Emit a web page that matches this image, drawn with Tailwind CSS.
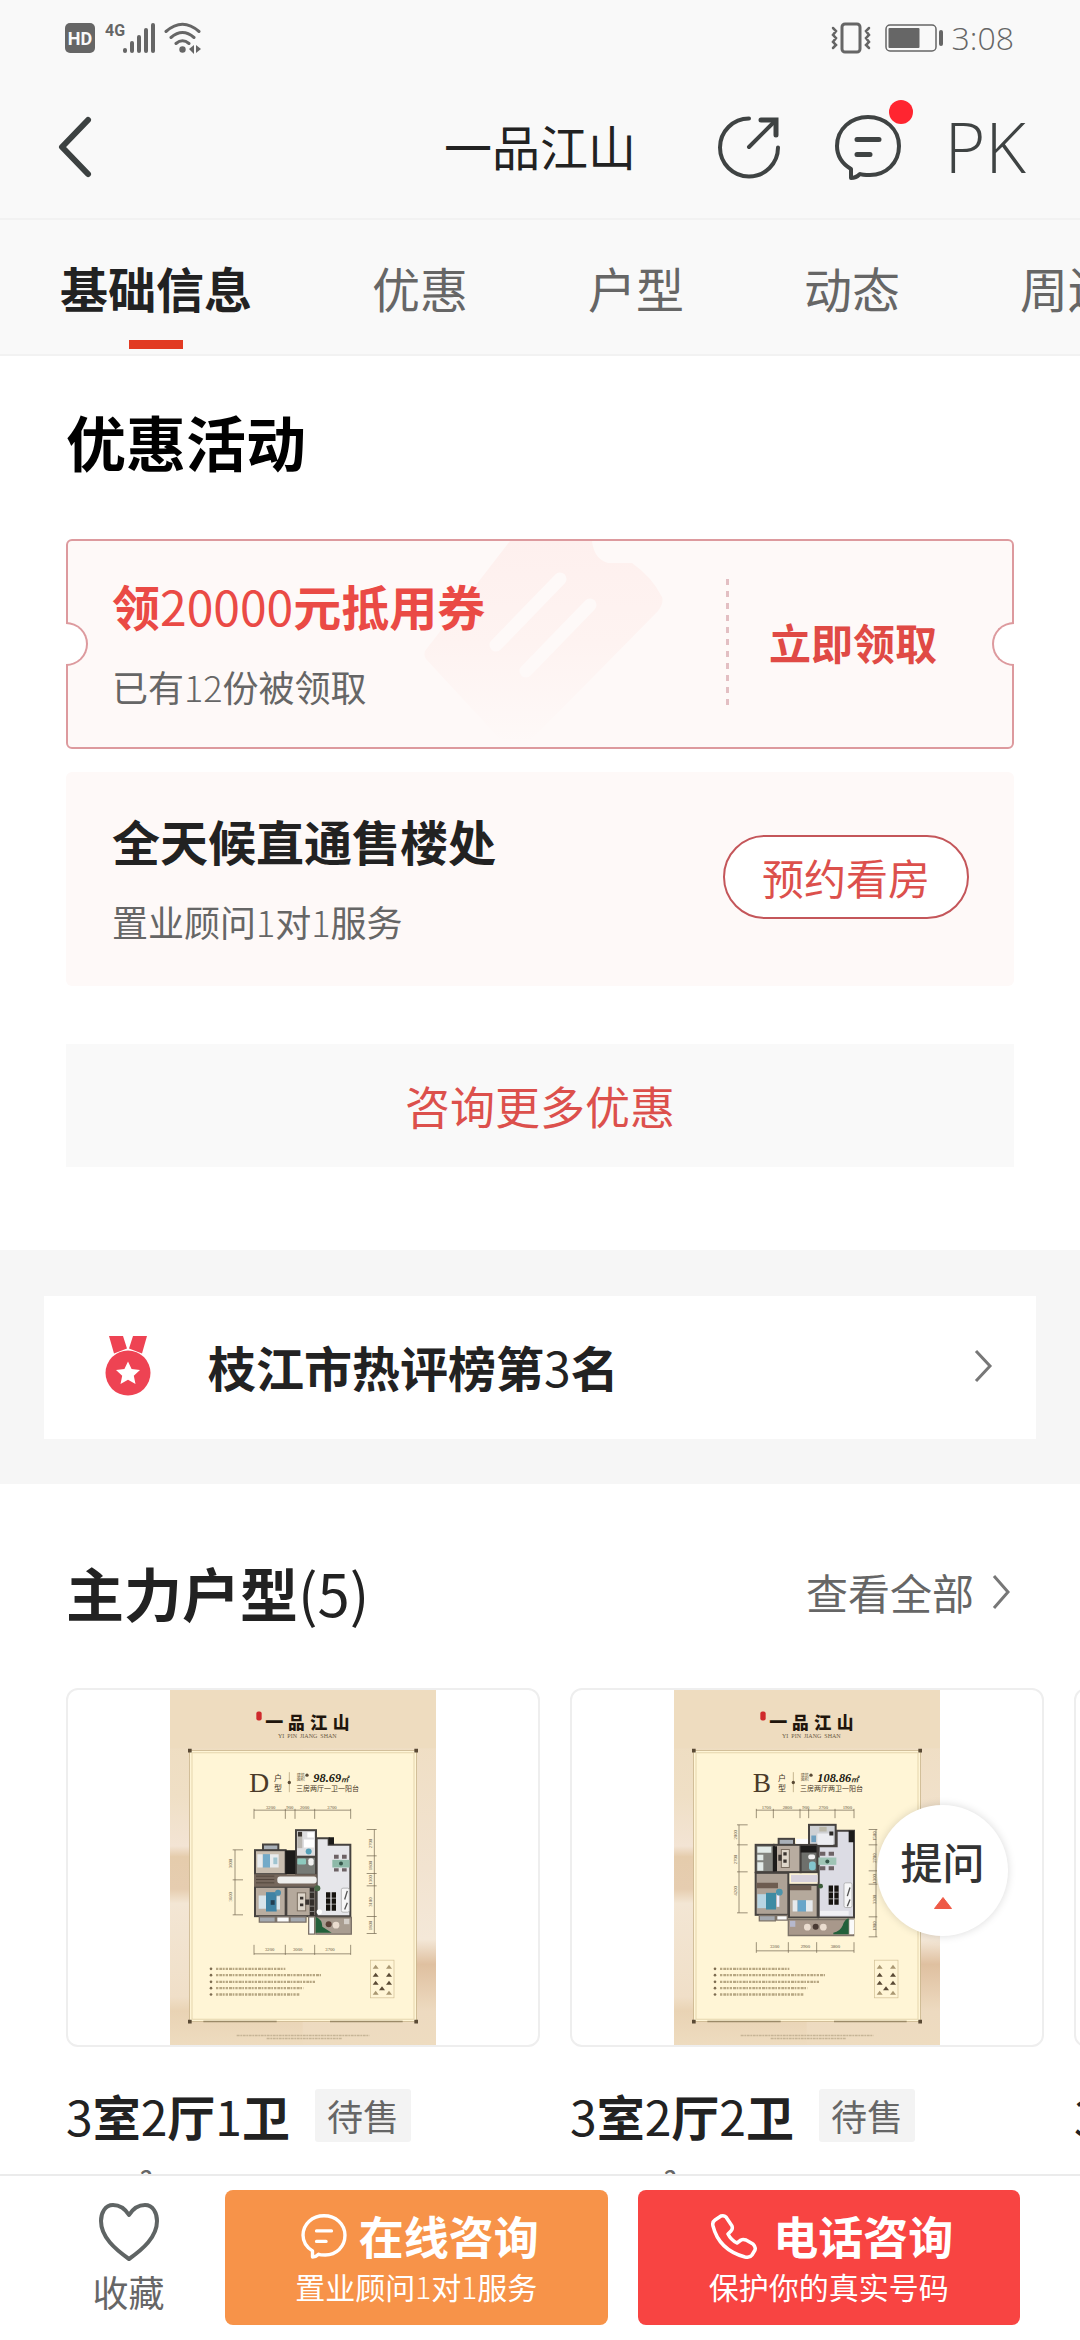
<!DOCTYPE html>
<html lang="zh-CN">
<head>
<meta charset="utf-8">
<meta name="viewport" content="width=device-width, initial-scale=1">
<title>一品江山</title>
<script src="https://cdn.jsdelivr.net/npm/@tailwindcss/browser@4"></script>
</head>
<body class="bg-white font-['Noto_Sans_CJK_SC',sans-serif] text-[#222]">
<div class="relative flex h-screen flex-col overflow-hidden">

  <header class="shrink-0 bg-[#f9f9f9]">
    <!-- status bar -->
    <div class="flex h-[76px] items-center justify-between pl-[65px] pr-[66px] text-[#666]">
      <div class="flex items-center">
        <span class="flex h-[30px] w-[30px] items-center justify-center rounded-[5px] bg-[#666] font-['Roboto',sans-serif] text-[18px] font-bold text-[#f9f9f9]">HD</span>
        <svg class="ml-[10px] h-[32px] w-[52px]" viewBox="0 0 52 32" fill="currentColor">
          <text x="0" y="14" font-family="Roboto, sans-serif" font-size="16" font-weight="700">4G</text>
          <rect x="18" y="26" width="4" height="5" rx="2"/><rect x="25" y="19" width="4" height="12" rx="2"/><rect x="32" y="13" width="4" height="18" rx="2"/><rect x="39" y="6" width="4" height="25" rx="2"/><rect x="46" y="1" width="4" height="30" rx="2"/>
        </svg>
        <svg class="ml-[7px] h-[32px] w-[38px]" viewBox="0 0 38 32" fill="none" stroke="currentColor" stroke-width="3" stroke-linecap="round">
          <path d="M2 9.500Q18.500-5 35 9.500M7 15.500Q18.500 5.500 30 15.500M12 21.500Q18.500 16 25 21.500"/>
          <circle cx="18.500" cy="27.500" r="3.200" fill="currentColor" stroke="none"/>
          <path d="M30 23v9l-5-5zM32 31v-8l5 4z" fill="currentColor" stroke="none"/>
        </svg>
      </div>
      <div class="flex items-center">
        <svg class="h-[32px] w-[40px]" viewBox="0 0 40 32" fill="none" stroke="currentColor" stroke-width="3" stroke-linecap="round">
          <rect x="11" y="2" width="18" height="28" rx="3"/>
          <path d="M2 6l3 3-3 4 3 3-3 4 3 3-3 3M38 6l-3 3 3 4-3 3 3 4-3 3 3 3" stroke-width="2.500"/>
        </svg>
        <svg class="ml-[14px] h-[28px] w-[60px]" viewBox="0 0 60 28" fill="none" stroke="currentColor">
          <rect x="1" y="1" width="50" height="26" rx="4" stroke-width="1.500"/>
          <rect x="3.500" y="4" width="31" height="20" rx="1" fill="currentColor" stroke="none"/>
          <rect x="54" y="6" width="4" height="16" rx="2" fill="currentColor" stroke="none"/>
        </svg>
        <span class="ml-[7px] font-['Open_Sans',sans-serif] text-[32px] font-light leading-[40px]">3:08</span>
      </div>
    </div>

    <!-- title bar -->
    <div class="relative flex h-[144px] items-center justify-between border-b-2 border-[#f2f2f2] pl-[55px] pr-[54px]">
      <button type="button" aria-label="返回">
        <svg class="h-[66px] w-[40px]" viewBox="0 0 40 66" fill="none" stroke="#3c4141" stroke-width="6" stroke-linecap="round" stroke-linejoin="round"><path d="M33 6L7 33l26 27"/></svg>
      </button>
      <h1 class="pointer-events-none absolute inset-x-0 pb-[4px] text-center text-[48px] leading-[60px]">一品江山</h1>
      <div class="flex items-center">
        <button type="button" aria-label="分享">
          <svg class="h-[66px] w-[66px]" viewBox="0 0 66 66" fill="none" stroke="#3f4343" stroke-width="4" stroke-linecap="round" stroke-linejoin="round">
            <path d="M33 4.500A29 29 0 1 0 62 33.500M33 33L58 8"/><path d="M45 6h15v15" stroke-width="5" stroke-linejoin="miter"/>
          </svg>
        </button>
        <button type="button" aria-label="消息" class="relative ml-[52px]">
          <svg class="h-[68px] w-[68px]" viewBox="0 0 68 68" fill="none" stroke="#3f4343" stroke-width="4" stroke-linecap="round" stroke-linejoin="round">
            <path d="M17 56C7 50 3 42 3 33C3 16 17 4 34 4s31 12 31 29S52 62 36 62c-4 0-8 0-10-1q-4 4-9 4z"/><path d="M23 26.500h22M23 41.500h13" stroke-width="5"/>
          </svg>
          <span class="absolute -top-[13px] right-[-11px] h-[24px] w-[24px] rounded-full bg-[#ff2530]"></span>
        </button>
        <button type="button" class="ml-[42px] pb-[2px] font-['Open_Sans',sans-serif] text-[70px] font-light leading-[80px] text-[#3f4343]">PK</button>
      </div>
    </div>

    <!-- section tabs -->
    <nav class="flex h-[136px] items-center gap-[120px] overflow-hidden whitespace-nowrap border-b-2 border-[#f2f2f2] px-[60px] text-[48px] leading-[60px] text-[#666]">
      <a href="#info" class="relative flex h-full shrink-0 items-center font-bold text-[#222]">基础信息<span class="absolute bottom-[5px] left-1/2 h-[9px] w-[54px] -translate-x-1/2 bg-[#e23a22]"></span></a>
      <a href="#offers" class="shrink-0">优惠</a>
      <a href="#units" class="shrink-0">户型</a>
      <a href="#news" class="shrink-0">动态</a>
      <a href="#around" class="shrink-0">周边</a>
    </nav>
  </header>

  <main class="min-h-0 flex-1 overflow-hidden">
    <section id="offers" class="px-[66px] pb-[83px] pt-[55px]">
      <h2 class="text-[60px] font-bold leading-[60px] text-black">优惠活动</h2>

      <div class="relative mt-[68px] flex h-[210px] items-center rounded-[6px] border-2 border-[#dd9a9e] bg-[#fef9f8] pb-[4px] pl-[44px]">
        <svg class="absolute left-[354px] top-0 h-[206px] w-[250px]" viewBox="0 0 250 206" fill="none">
          <defs><linearGradient id="fade" x1="0" y1="0" x2="0" y2="1"><stop offset="0" stop-color="#fef0ee"/><stop offset=".5" stop-color="#fef3f1"/><stop offset="1" stop-color="#fef9f8"/></linearGradient></defs>
          <path d="M88 0h82q2 18 16 22h24q20 14 30 34q2 6-4 14L112 196q-18 14-36 0L4 118q-4-6 2-12z" fill="url(#fade)"/>
          <path d="M138 38L74 104M168 64L104 130" stroke="#fef9f8" stroke-width="13" stroke-linecap="round"/>
        </svg>
        <span class="absolute -left-[2px] top-[81px] h-[44px] w-[22px] rounded-r-full border-2 border-l-0 border-[#dd9a9e] bg-white"></span>
        <span class="absolute -right-[2px] top-[81px] h-[44px] w-[22px] rounded-l-full border-2 border-r-0 border-[#dd9a9e] bg-white"></span>
        <div class="relative flex-1">
          <h3 class="text-[48px] font-bold leading-[60px] text-[#ea4a45]">领<span class="font-normal">20000</span>元抵用券</h3>
          <p class="mt-[27px] text-[36px] leading-[48px] text-[#666]">已有<span class="font-light">12</span>份被领取</p>
        </div>
        <div class="h-[126px] w-[3px] bg-[repeating-linear-gradient(to_bottom,#e3bfc3_0_6px,transparent_6px_12px)]"></div>
        <button type="button" class="ml-[40px] mr-[75px] text-[42px] font-bold leading-[60px] text-[#e04a45]">立即领取</button>
      </div>

      <div class="mt-[23px] flex h-[214px] items-center justify-between rounded-[6px] bg-[#fef9f8] pb-[4px] pl-[46px] pr-[45px]">
        <div>
          <h3 class="text-[48px] font-bold leading-[60px]">全天候直通售楼处</h3>
          <p class="mt-[27px] text-[36px] leading-[48px] text-[#666]">置业顾问<span class="font-light">1</span>对<span class="font-light">1</span>服务</p>
        </div>
        <button type="button" class="h-[84px] w-[246px] rounded-full border-2 border-[#c4565a] bg-white text-[42px] leading-[60px] text-[#dc504c]">预约看房</button>
      </div>

      <button type="button" class="mt-[58px] block h-[123px] w-full bg-[#f9f9f9] text-[45px] leading-[60px] text-[#dc504c]">咨询更多优惠</button>
    </section>

    <section class="bg-[#f6f6f6] px-[44px] pb-[45px] pt-[46px]">
      <a href="#rank" class="flex h-[143px] items-center bg-white pb-[4px] pl-[60px] pr-[42px]">
        <svg class="h-[64px] w-[48px]" viewBox="0 0 48 64" fill="#ee4353">
          <path d="M5 2h14l4 12.500-13 5zM43 2H29l-4 12.500 13 5z"/><circle cx="24" cy="39" r="22.500"/>
          <path d="M24 27.500l3.600 7.600 8.400 1-6.200 5.700 1.700 8.200-7.500-4.200-7.500 4.200 1.700-8.200L12 36.100l8.400-1z" fill="#fff"/>
        </svg>
        <span class="ml-[56px] flex-1 text-[48px] font-bold leading-[60px]">枝江市热评榜第<span class="font-normal">3</span>名</span>
        <svg class="h-[36px] w-[20px]" viewBox="0 0 20 36" fill="none" stroke="#777" stroke-width="3"><path d="M2 3l14 15L2 33"/></svg>
      </a>
    </section>

    <section id="units" class="pl-[66px] pt-[78px]">
      <div class="flex items-center justify-between pr-[68px]">
        <h2 class="text-[58px] font-bold leading-[60px]">主力户型<span class="font-normal">(5)</span></h2>
        <a href="#all" class="flex items-center text-[42px] leading-[60px] text-[#666]">查看全部
          <svg class="ml-[18px] h-[38px] w-[20px]" viewBox="0 0 20 38" fill="none" stroke="#777" stroke-width="3"><path d="M2 3l14 16L2 35"/></svg>
        </a>
      </div>

      <div class="mt-[66px] flex gap-[30px] overflow-hidden">
        <article class="w-[474px] shrink-0">
          <div class="flex h-[359px] justify-center overflow-hidden rounded-[12px] border-2 border-[#eee]">
            <svg class="-mt-[2px] h-[359px] w-[266px] shrink-0" viewBox="360 56 798 1076" role="img" aria-label="D户型图">
              <defs>
                <linearGradient id="paper" x1="0" y1="0" x2="0" y2="1"><stop offset="0" stop-color="#eedcbf"/><stop offset=".3" stop-color="#efdfc5"/><stop offset=".44" stop-color="#f3e4d4"/><stop offset=".47" stop-color="#e5ccac"/><stop offset=".56" stop-color="#e6cdb0"/><stop offset=".6" stop-color="#f3e6d4"/><stop offset=".86" stop-color="#f0dfc8"/><stop offset=".9" stop-color="#e9d3b4"/><stop offset="1" stop-color="#eedcc0"/></linearGradient>
                <linearGradient id="paper2" x1="0" y1="0" x2="0" y2="1"><stop offset="0" stop-color="#eedcbf"/><stop offset=".5" stop-color="#f2e3d0"/><stop offset=".7" stop-color="#f4e8d8"/><stop offset=".77" stop-color="#dfc0a0"/><stop offset=".9" stop-color="#eddac0"/><stop offset="1" stop-color="#eedcc0"/></linearGradient>
                <g id="sheet">
                  <rect x="360" y="56" width="400" height="1076" fill="url(#paper)"/>
                  <rect x="758" y="56" width="400" height="1076" fill="url(#paper2)"/>
                  <rect x="360" y="56" width="798" height="180" fill="#eedcbf"/>
                  <rect x="419" y="243" width="680" height="813" fill="#fff5d6" stroke="#c0ab80" stroke-width="2"/>
                  <rect x="426" y="250" width="666" height="799" fill="none" stroke="#d8c699" stroke-width="2"/>
                  <path d="M414 238h11v11h-11zM1093 238h11v11h-11zM414 1051h11v11h-11zM1093 1051h11v11h-11z" fill="#5a4a35"/>
                  <path d="M460 1056h220M840 1056h218" stroke="#9b8a68" stroke-width="4"/>
                  <rect x="619" y="126" width="16" height="27" rx="6" fill="#cf2a2c"/>
                  <g font-family="'Noto Sans CJK SC', sans-serif" font-weight="900" font-size="54" fill="#20150c"><text x="646" y="179">一</text><text x="714" y="179" font-size="50">品</text><text x="780" y="179" font-size="52">江</text><text x="848" y="177" font-size="50">山</text></g>
                  <text x="684" y="205" font-family="'Liberation Serif', serif" font-size="18" fill="#6b5a44">YI&#160; PIN&#160; JIANG&#160; SHAN</text>
                  <g font-family="'Noto Sans CJK SC', sans-serif" font-size="24" fill="#3d3022"><text x="672" y="334">户</text><text x="672" y="364">型</text></g>
                  <path d="M718 308v60" stroke="#a8946c" stroke-width="2"/><circle cx="718" cy="339" r="5" fill="#5a4a35"/>
                  <g font-family="'Noto Sans CJK SC', sans-serif" font-size="12" fill="#6b5a44"><text x="740" y="321">建筑</text><text x="740" y="335">面积</text></g><circle cx="771" cy="317" r="5" fill="#5a4a35"/>
                  <g fill="#7d6c50"><circle cx="483" cy="898" r="4"/><circle cx="483" cy="917" r="4"/><circle cx="483" cy="937" r="4"/><circle cx="483" cy="956" r="4"/><circle cx="483" cy="975" r="4"/></g>
                  <path d="M498 898h208M498 917h315M498 937h298M498 956h262M498 975h250" stroke="#b7a783" stroke-width="7" stroke-dasharray="7 3 9 2 5 3"/>
                  <rect x="961" y="872" width="71" height="113" fill="none" stroke="#d0bd92" stroke-width="2"/>
                  <path d="M968 922l9-12 9 12zM1008 922l9-12 9 12zM968 946l9-12 9 12zM1008 946l9-12 9 12zM987 962l9-12 9 12z" fill="#5a4a35"/>
                  <path d="M968 898l9-12 9 12zM1008 898l9-12 9 12zM968 976l9-12 9 12zM1008 976l9-12 9 12z" fill="#a99772"/>
                  <path d="M560 1098h398M650 1107h225" stroke="#c6b596" stroke-width="4" stroke-dasharray="9 2 5 2"/>
                </g>
              </defs>
              <use href="#sheet"/>
              <text x="597" y="367" font-family="'Liberation Serif', serif" font-size="84" fill="#4a3a28">D</text>
              <text x="790" y="336" font-family="'Liberation Serif', serif" font-style="italic" font-weight="700" font-size="37" fill="#221a10">98.69<tspan font-size="22">㎡</tspan></text>
              <text x="738" y="364" font-family="'Noto Sans CJK SC', sans-serif" font-size="21" fill="#4a3a28">三房两厅一卫一阳台</text>
              <g stroke="#6b5f4a" stroke-width="2" fill="none"><path d="M612 422h290M612 418v30M706 418v30M735 418v30M794 418v30M902 418v30M612 853h290M612 826v30M706 826v30M794 826v30M902 826v30M555 541v195M548 541h31M548 631h31M548 736h31M973 480v312M950 480h30M950 559h30M950 612h30M950 649h30M950 741h30M950 792h30"/></g>
              <g font-family="'Liberation Serif', serif" font-size="14" fill="#5d5240"><text x="648" y="417">3200</text><text x="709" y="417">900</text><text x="750" y="417">2000</text><text x="832" y="417">3700</text><text x="645" y="844">3200</text><text x="729" y="844">3000</text><text x="826" y="844">3700</text>
              <text transform="translate(546 596) rotate(-90)">3000</text><text transform="translate(546 696) rotate(-90)">3600</text><text transform="translate(967 536) rotate(-90)">2700</text><text transform="translate(967 602) rotate(-90)">1800</text><text transform="translate(967 645) rotate(-90)">1300</text><text transform="translate(967 712) rotate(-90)">3100</text><text transform="translate(967 782) rotate(-90)">1800</text></g>
              <g stroke="#46423f" stroke-width="6">
                <rect x="639" y="525" width="46" height="20" fill="#a9b0b8"/>
                <rect x="615" y="542" width="92" height="72" fill="#c9beb0"/>
                <rect x="738" y="482" width="60" height="80" fill="#dedee0"/>
                <rect x="738" y="562" width="60" height="54" fill="#777b76"/>
                <path d="M800 506h36v20h65v214H800z" fill="#e6e6ea"/>
                <rect x="615" y="652" width="92" height="88" fill="#b9ada0"/>
                <rect x="709" y="652" width="88" height="88" fill="#b5a99c"/>
              </g>
              <path d="M706 542h30v72h-30zM836 503h16v22h-16z" fill="#1c1b1a"/>
              <path d="M612 614h188v38H612z" fill="#75675c"/><path d="M618 620h55M618 630h55M618 640h55" stroke="#53463d" stroke-width="3"/><rect x="682" y="621" width="118" height="21" rx="8" fill="#eeeeec"/>
              <path d="M638 554h22v40h-22z" fill="#73aac8"/><path d="M622 554h16v40h-16zM660 554h26v40h-26z" fill="#e8ebed"/><path d="M670 564h12v20h-12z" fill="#9fc4d0"/>
              <path d="M648 668h32v58h-32z" fill="#3f83a5"/><path d="M626 678h22v40h-22zM680 680h10v40h-10z" fill="#d8e4ea"/><circle cx="684" cy="670" r="9" fill="#4c8dab"/><path d="M662 692h12v14h-12z" fill="#213e52"/>
              <rect x="742" y="670" width="25" height="54" fill="#ded6ca" stroke="#7a6d60" stroke-width="3"/><path d="M750 682h10v8h-10zM750 702h10v8h-10zM766 690h12v16h-12z" fill="#3a3430"/><path d="M779 655h14v84h-14z" fill="#332e2b"/><path d="M779 668h14M779 688h14M779 710h14M779 726h14" stroke="#aaa" stroke-width="2"/>
              <path d="M742 488h15v48h-15z" fill="#b9b6b0"/><path d="M744 487h12v14h-12z" fill="#3a3430"/><path d="M772 488h20v16h-20zM762 510h30v24h-30z" fill="#fff"/><circle cx="776" cy="546" r="9" fill="#54a0b8"/><rect x="742" y="567" width="26" height="18" rx="4" fill="#8dc9bd"/><rect x="775" y="566" width="16" height="22" rx="6" fill="#f1f1f1"/>
              <rect x="847" y="571" width="52" height="23" fill="#8eb9a8"/><path d="M852 556h14v12h-14zM876 556h14v12h-14zM852 596h14v10h-14zM876 596h14v10h-14z" fill="#6d6265"/><circle cx="873" cy="582" r="6" fill="#35564a"/>
              <path d="M828 668h13v56h-13zM845 668h13v56h-13z" fill="#16130f"/><path d="M828 686h30M828 704h30" stroke="#ddd" stroke-width="2"/><rect x="874" y="656" width="24" height="72" rx="5" fill="#f7f7f8" stroke="#9b9b9b" stroke-width="2"/><path d="M884 690l8-26M884 720l8-20" stroke="#555" stroke-width="4"/><circle cx="802" cy="656" r="9" fill="#496a48"/><circle cx="808" cy="727" r="8" fill="#fff"/>
              <g stroke="#7d7369" stroke-width="4"><path d="M628 742h48v16h-48zM720 742h48v16h-48z" fill="#a4a9b0"/><path d="M680 742h38v16h-38zM776 742h18v52h-18z" fill="#fafafa"/><path d="M798 744h106v50H798z" fill="#a99d91"/></g>
              <path d="M797 742q20 8 20 30l28 18h-48z" fill="#22603a"/><circle cx="836" cy="764" r="9" fill="#5b4137"/><circle cx="858" cy="767" r="10" fill="#eadccf"/><rect x="882" y="748" width="16" height="16" fill="#d4cec8"/>
            </svg>
          </div>
          <div class="mt-[42px] flex items-center">
            <h3 class="text-[48px] font-bold leading-[53px]"><span class="font-normal">3</span>室<span class="font-normal">2</span>厅<span class="font-normal">1</span>卫</h3>
            <span class="ml-[25px] rounded-[3px] bg-[#f3f3f3] px-[12px] text-[36px] leading-[53px] text-[#666]">待售</span>
          </div>
          <p class="mt-[14px] text-[36px] leading-[60px] text-[#666]">98m²</p>
        </article>

        <article class="w-[474px] shrink-0">
          <div class="flex h-[359px] justify-center overflow-hidden rounded-[12px] border-2 border-[#eee]">
            <svg class="-mt-[2px] h-[359px] w-[266px] shrink-0" viewBox="360 56 798 1076" role="img" aria-label="B户型图">
              <use href="#sheet"/>
              <text x="596" y="367" font-family="'Liberation Serif', serif" font-size="82" fill="#4a3a28">B</text>
              <text x="790" y="336" font-family="'Liberation Serif', serif" font-style="italic" font-weight="700" font-size="37" fill="#221a10">108.86<tspan font-size="22">㎡</tspan></text>
              <text x="738" y="364" font-family="'Noto Sans CJK SC', sans-serif" font-size="21" fill="#4a3a28">三房两厅两卫一阳台</text>
              <g font-family="'Liberation Serif', serif" font-size="14" fill="#5d5240"><text x="623" y="417">1700</text><text x="686" y="417">2800</text><text x="745" y="417">900</text><text x="794" y="417">2700</text><text x="866" y="417">1900</text><text x="648" y="836">3300</text><text x="740" y="836">2900</text><text x="830" y="836">3800</text>
              <text transform="translate(550 510) rotate(-90)">2000</text><text transform="translate(550 584) rotate(-90)">2700</text><text transform="translate(550 678) rotate(-90)">4200</text><text transform="translate(965 514) rotate(-90)">1500</text><text transform="translate(965 580) rotate(-90)">2700</text><text transform="translate(965 642) rotate(-90)">1300</text><text transform="translate(965 704) rotate(-90)">3300</text><text transform="translate(965 784) rotate(-90)">1900</text></g>
              <g transform="translate(-4 0)">
                <path d="M611 422h293M611 418v28M662 418v28M742 418v28M768 418v28M847 418v28M904 418v28M611 844h293M611 818v32M707 818v32M792 818v32M904 818v32M559 466v264M553 466h32M553 526h32M553 607h32M553 730h32M970 480v322M948 480h26M948 526h26M948 604h26M948 644h26M948 742h26M948 802h26" stroke="#6b5f4a" stroke-width="2" fill="none"/>
                <g stroke="#46423f" stroke-width="6">
                  <rect x="678" y="508" width="46" height="20" fill="#a9b0b8"/>
                  <rect x="769" y="466" width="80" height="62" fill="#cfd1d4"/>
                  <rect x="609" y="526" width="54" height="82" fill="#83847f"/>
                  <rect x="664" y="526" width="80" height="82" fill="#b8aca0"/>
                  <rect x="744" y="526" width="50" height="82" fill="#6e706c"/>
                  <path d="M852 484h52v260H798V530h54z" fill="#dcdce4"/>
                  <rect x="609" y="610" width="98" height="126" fill="#aea296"/>
                  <rect x="709" y="646" width="86" height="98" fill="#b5a99c"/>
                </g>
                <path d="M744 529h48v20h-48zM888 484h16v34h-16zM661 530h12v76h-12z" fill="#1c1b1a"/>
                <rect x="730" y="508" width="36" height="15" fill="#fafafa"/><rect x="715" y="616" width="80" height="22" fill="#d8d2dc"/><path d="M612 640h64v16h-64zM712 648h64v14h-64z" fill="#6d5c50"/>
                <path d="M614 532h42v18h-42zM614 556h18v16h-18zM614 578h18v26h-18z" fill="#e3ebe8"/><rect x="686" y="540" width="24" height="54" fill="#ded6ca" stroke="#7a6d60" stroke-width="3"/><path d="M692 548h10v10h-10zM692 570h10v10h-10zM677 556h10v18h-10z" fill="#3a3430"/><rect x="767" y="555" width="20" height="14" rx="5" fill="#f1f1f1"/><rect x="769" y="576" width="20" height="26" rx="8" fill="#83c5cd"/>
                <path d="M776 498h14v20h-14z" fill="#6f9fbe"/><path d="M800 472h22v14h-22z" fill="#bab7a8"/><path d="M794 492h48v34h-48z" fill="#ecedf1"/><path d="M830 486h12v12h-12z" fill="#2c2a28"/>
                <rect x="797" y="564" width="54" height="22" fill="#9fc4b5"/><path d="M802 547h16v12h-16zM828 547h16v12h-16zM802 590h16v12h-16zM828 590h16v12h-16z" fill="#6d6265"/><circle cx="824" cy="576" r="6" fill="#35564a"/>
                <path d="M640 670h30v50h-30z" fill="#3e8ba3"/><path d="M614 674h26v42h-26z" fill="#b8d5e2"/><path d="M672 672h8v40h-8z" fill="#eef"/><circle cx="680" cy="668" r="10" fill="#4c94ab"/><path d="M734 692h26v34h-26z" fill="#68a5c9"/><path d="M720 692h14v34h-14zM760 692h20v34h-20z" fill="#e6e9ec"/>
                <path d="M828 648h13v58h-13zM845 648h13v58h-13z" fill="#16130f"/><path d="M828 668h30M828 688h30" stroke="#ddd" stroke-width="2"/><rect x="874" y="640" width="24" height="74" rx="5" fill="#f7f7f8" stroke="#9b9b9b" stroke-width="2"/><path d="M884 680l8-26M884 710l8-20" stroke="#555" stroke-width="4"/><circle cx="804" cy="650" r="7" fill="#3b5c3a"/><path d="M802 724h86v14h-86z" fill="#f1f1f4"/>
                <g stroke="#7d7369" stroke-width="4"><path d="M620 738h48v16h-48z" fill="#a4a9b0"/><path d="M672 738h32v14h-32z" fill="#fafafa"/><path d="M707 750h196v48H707z" fill="#a8988b"/></g>
                <path d="M842 790q20-4 28-22q6-20 18-22v48h-46z" fill="#22603a"/><rect x="890" y="750" width="14" height="44" fill="#fafafa"/><circle cx="764" cy="773" r="10" fill="#eadccf"/><circle cx="789" cy="772" r="9" fill="#4a3a33"/><circle cx="812" cy="773" r="10" fill="#eadccf"/><rect x="712" y="754" width="16" height="18" fill="#b6b8cc"/>
              </g>
            </svg>
          </div>
          <div class="mt-[42px] flex items-center">
            <h3 class="text-[48px] font-bold leading-[53px]"><span class="font-normal">3</span>室<span class="font-normal">2</span>厅<span class="font-normal">2</span>卫</h3>
            <span class="ml-[25px] rounded-[3px] bg-[#f3f3f3] px-[12px] text-[36px] leading-[53px] text-[#666]">待售</span>
          </div>
          <p class="mt-[14px] text-[36px] leading-[60px] text-[#666]">108m²</p>
        </article>

        <article class="w-[474px] shrink-0">
          <div class="h-[359px] rounded-[12px] border-2 border-[#eee]"></div>
          <h3 class="mt-[42px] text-[48px] font-bold leading-[53px]"><span class="font-normal">3</span>室</h3>
        </article>
      </div>
    </section>
  </main>

  <!-- floating ask button -->
  <button type="button" class="absolute bottom-[404px] right-[72px] flex h-[131px] w-[131px] flex-col items-center rounded-full bg-white pt-[26px] text-[42px] font-medium leading-[60px] text-[#333] shadow-[0_0_8px_rgba(0,0,0,0.15)]">提问
    <svg class="mt-[6px] h-[12px] w-[18px]" viewBox="0 0 18 12" fill="#ee5a47"><path d="M9 0.500L17.500 11.500H.5z" stroke="#ee5a47" stroke-linejoin="round"/></svg>
  </button>

  <footer class="flex h-[166px] shrink-0 border-t-2 border-[#ebebeb] bg-white pb-[15px] pr-[60px] pt-[14px]">
    <button type="button" class="flex w-[225px] flex-col items-center pl-[32px] pt-[11px] text-[36px] leading-[48px] text-[#666]">
      <svg class="h-[62px] w-[64px]" viewBox="0 0 64 62" fill="none" stroke="#5f6464" stroke-width="4" stroke-linejoin="round"><path d="M32 14C27 6 20 4 16 4C8 4 4 12 4 20c0 16 14 28 28 38c14-10 28-22 28-38c0-8-4-16-12-16c-4 0-11 2-16 10z"/></svg>
      <span class="mt-[4px]">收藏</span>
    </button>
    <div class="flex flex-1 gap-[30px] text-white">
      <button type="button" class="flex flex-1 flex-col items-center rounded-[8px] bg-[#f79349] pt-[16px]">
        <span class="flex items-center pl-[7px] text-[45px] font-bold leading-[60px]">
          <svg class="mr-[12px] h-[46px] w-[46px]" viewBox="0 0 68 68" fill="none" stroke="currentColor" stroke-width="5" stroke-linecap="round" stroke-linejoin="round"><path d="M17 56C7 50 3 42 3 33C3 16 17 4 34 4s31 12 31 29S52 62 36 62c-4 0-8 0-10-1q-4 4-9 4z"/><path d="M23 26.500h22M23 42h14"/></svg>在线咨询</span>
        <span class="text-[30px] leading-[40px]">置业顾问<span class="font-light">1</span>对<span class="font-light">1</span>服务</span>
      </button>
      <button type="button" class="flex flex-1 flex-col items-center rounded-[8px] bg-[#f84442] pt-[16px]">
        <span class="flex items-center pl-[7px] text-[45px] font-bold leading-[60px]">
          <svg class="mr-[16px] h-[46px] w-[46px]" viewBox="0 0 46 46" fill="none" stroke="currentColor" stroke-width="3.500" stroke-linejoin="round"><path d="M4 7l6-4q3-1 5 1l6 9q1 3-1 5l-3 3q3 6 9 9l4-3q2-1 5 0l7 4q3 3 2 6l-3 5q-2 3-7 2Q8 37 2 13q-1-4 2-6z"/></svg>电话咨询</span>
        <span class="text-[30px] leading-[40px]">保护你的真实号码</span>
      </button>
    </div>
  </footer>
</div>
</body>
</html>
